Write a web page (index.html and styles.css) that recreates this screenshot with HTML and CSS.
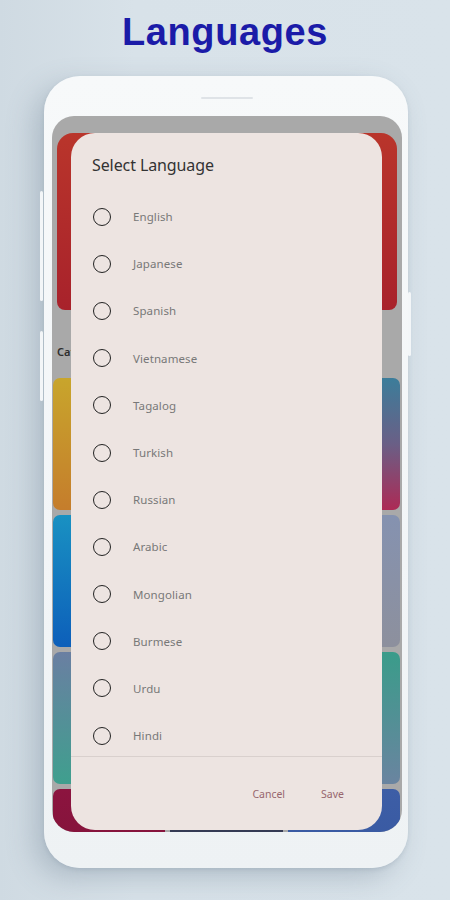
FILE: index.html
```html
<!DOCTYPE html>
<html lang="en">
<head>
<meta charset="utf-8">
<title>Languages</title>
<link rel="stylesheet" href="styles.css">
</head>
<body>
<div class="page">
  <h1 class="headline">Languages</h1>
  <div class="phone">
    <span class="side-btn side-left-1"></span>
    <span class="side-btn side-left-2"></span>
    <span class="side-btn side-right"></span>
    <div class="speaker"></div>
    <div class="screen">
      <div class="banner"></div>
      <div class="section-label">Categories</div>
      <div class="card-grid">
        <div class="card c1"></div><div class="card c2"></div><div class="card c3"></div>
        <div class="card c4"></div><div class="card c5"></div><div class="card c6"></div>
        <div class="card c7"></div><div class="card c8"></div><div class="card c9"></div>
        <div class="card c10"></div><div class="card c11"></div><div class="card c12"></div>
      </div>

      <div class="dialog">
        <div class="dialog-title">Select Language</div>
        <ul class="lang-list">
          <li class="lang-item"><span class="radio"></span><span class="lang-name">English</span></li>
          <li class="lang-item"><span class="radio"></span><span class="lang-name">Japanese</span></li>
          <li class="lang-item"><span class="radio"></span><span class="lang-name">Spanish</span></li>
          <li class="lang-item"><span class="radio"></span><span class="lang-name">Vietnamese</span></li>
          <li class="lang-item"><span class="radio"></span><span class="lang-name">Tagalog</span></li>
          <li class="lang-item"><span class="radio"></span><span class="lang-name">Turkish</span></li>
          <li class="lang-item"><span class="radio"></span><span class="lang-name">Russian</span></li>
          <li class="lang-item"><span class="radio"></span><span class="lang-name">Arabic</span></li>
          <li class="lang-item"><span class="radio"></span><span class="lang-name">Mongolian</span></li>
          <li class="lang-item"><span class="radio"></span><span class="lang-name">Burmese</span></li>
          <li class="lang-item"><span class="radio"></span><span class="lang-name">Urdu</span></li>
          <li class="lang-item"><span class="radio"></span><span class="lang-name">Hindi</span></li>
        </ul>
        <div class="dialog-actions">
          <span class="action">Cancel</span>
          <span class="action">Save</span>
        </div>
      </div>
    </div>
  </div>
</div>
</body>
</html>
```

FILE: styles.css
```css
* { box-sizing: border-box; }

html, body {
  margin: 0;
  padding: 0;
}

body {
  width: 450px;
  height: 900px;
  overflow: hidden;
  background: linear-gradient(90deg, #cfdae2 0%, #d8e2e9 30%, #d9e3ea 100%);
  font-family: "Noto Sans", "Open Sans", sans-serif;
}

.page {
  display: flex;
  flex-direction: column;
  padding-top: 10px;
}

.headline {
  margin: 0;
  text-align: center;
  font-family: "Liberation Sans", Arial, sans-serif;
  font-weight: bold;
  font-size: 38px;
  line-height: 44px;
  color: #1b1ba8;
  letter-spacing: 0.6px;
}

.phone {
  position: relative;
  margin: 22px 0 0 44px;
  width: 364px;
  height: 792px;
  background: linear-gradient(180deg, #f7f9fa 0%, #f2f5f7 60%, #eef2f4 100%);
  border-radius: 36px;
  padding: 21px 6px 36px 8px;
  box-shadow: -10px 10px 28px rgba(90, 110, 130, 0.30), 0 2px 4px rgba(90, 110, 130, 0.15);
}

.side-btn {
  position: absolute;
  width: 3px;
  background: #f3f6f8;
  border-radius: 2px;
}
.side-left-1 { left: -4px; top: 115px; height: 110px; }
.side-left-2 { left: -4px; top: 255px; height: 70px; }
.side-right { right: -3px; top: 216px; height: 64px; }

.speaker {
  width: 52px;
  height: 2px;
  margin: 0 auto 17px auto;
  background: #dfe3e7;
  border-radius: 1px;
}

.screen {
  position: relative;
  width: 350px;
  height: 716px;
  background: #a9a9a9;
  border-radius: 22px;
  overflow: hidden;
  padding: 17px 2px 0 1px;
}

.banner {
  height: 177px;
  margin: 0 3px 0 4px;
  border-radius: 16px 16px 8px 8px;
  background: linear-gradient(180deg, #b9352b 0%, #a8222b 100%);
}

.section-label {
  margin: 34px 0 18px 4px;
  font-size: 11px;
  line-height: 16px;
  font-weight: 600;
  color: #2e2e2e;
}

.card-grid {
  display: grid;
  grid-template-columns: repeat(3, 1fr);
  grid-auto-rows: 132px;
  gap: 5px;
}

.card { border-radius: 7px; }
.c1 { background: linear-gradient(180deg, #c8a52c 0%, #c57d2c 100%); }
.c2 { background: linear-gradient(180deg, #7a5ab0 0%, #b04a70 100%); }
.c3 { background: linear-gradient(180deg, #3c7d9a 0%, #6a5f86 50%, #ad2a55 100%); }
.c4 { background: linear-gradient(180deg, #1991c2 0%, #0d5fba 100%); }
.c5 { background: linear-gradient(180deg, #5a7ab0 0%, #8a6a90 100%); }
.c6 { background: linear-gradient(180deg, #8592b0 0%, #8d909d 100%); }
.c7 { background: linear-gradient(180deg, #6a7fa2 0%, #3f9f8e 100%); }
.c8 { background: linear-gradient(180deg, #5a8a9a 0%, #4a7a9a 100%); }
.c9 { background: linear-gradient(180deg, #3a9c8a 0%, #6a84a0 100%); }
.c10 { background: linear-gradient(180deg, #8c143f 0%, #7a1235 100%); }
.c11 { background: linear-gradient(180deg, #3a3030 0%, #2a50a0 100%); }
.c12 { background: linear-gradient(180deg, #3d5ea6 0%, #34549e 100%); }

.dialog {
  position: absolute;
  left: 19px;
  top: 17px;
  right: 20px;
  bottom: 2px;
  background: #ede4e1;
  border-radius: 24px;
  display: flex;
  flex-direction: column;
}

.dialog-title {
  padding: 20px 0 0 21px;
  font-size: 16px;
  line-height: 24px;
  color: #333333;
  letter-spacing: -0.1px;
}

.lang-list {
  list-style: none;
  margin: 16px 0 0 0;
  padding: 0;
}

.lang-item {
  display: flex;
  align-items: center;
  height: 47.2px;
  padding-left: 22px;
}

.radio {
  width: 18px;
  height: 18px;
  border: 1.5px solid #222222;
  border-radius: 50%;
  flex: none;
}

.lang-name {
  margin-left: 22px;
  font-size: 11.5px;
  color: #787878;
  letter-spacing: 0.1px;
}

.dialog-actions {
  margin-top: -3px;
  border-top: 1px solid #d9d0cd;
  display: flex;
  justify-content: flex-end;
  align-items: center;
  gap: 36px;
  padding: 28px 38px 0 0;
}

.action {
  font-size: 10.5px;
  line-height: 18px;
  color: #97666e;
}
```
